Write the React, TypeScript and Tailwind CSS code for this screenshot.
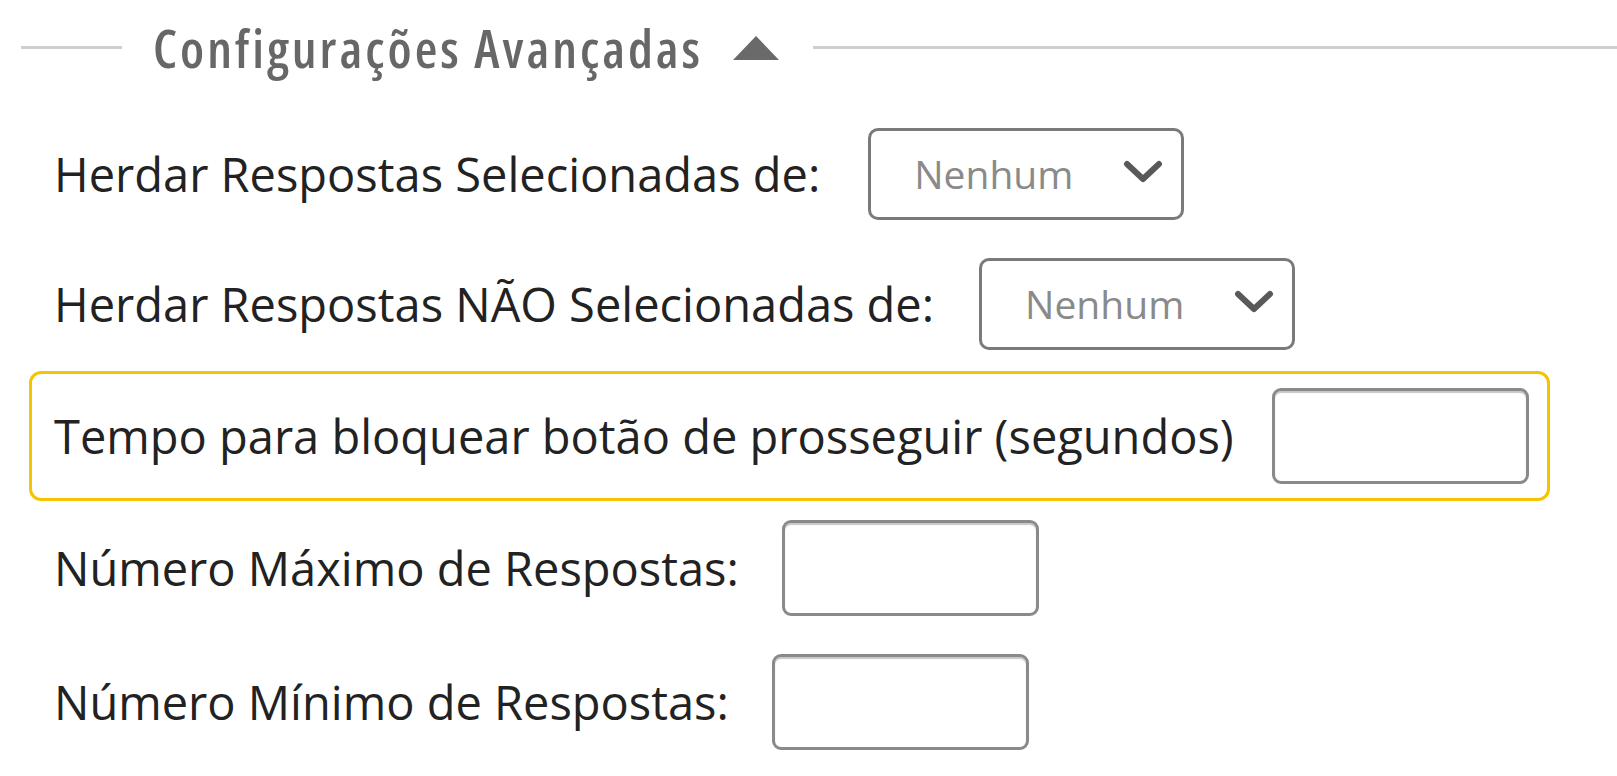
const labelFont = "font-['Open_Sans','Noto_Sans',sans-serif]";

function Select() {
  return (
    <div className="flex h-[92px] w-[316px] shrink-0 items-center justify-between rounded-[10px] border-[3px] border-[#7a7a7a] bg-white pl-[43px] pr-[18px]">
      <span className={`${labelFont} text-[39px] text-[#8a8a8a]`}>Nenhum</span>
      <svg width="40" height="24" viewBox="0 0 40 24" className="mb-[4px]">
        <polyline points="4,4 20,19 36,4" fill="none" stroke="#595959" strokeWidth="6" strokeLinecap="round" strokeLinejoin="round" />
      </svg>
    </div>
  );
}

function NumberInput() {
  return (
    <input
      type="text"
      className="h-[96px] w-[257px] shrink-0 rounded-[9px] border-[3px] border-[#8a8a8a] bg-white shadow-[inset_0_2px_1px_rgba(0,0,0,0.22)] outline-none"
    />
  );
}

export default function App() {
  return (
    <div className="h-[776px] w-full overflow-hidden bg-white">
      {/* Section header */}
      <div className="flex h-[95px] items-center pl-[21px]">
        <div className="h-[3px] w-[101px] bg-[#cfcfcf]" />
        <span className="ml-[31px] font-['Open_Sans','Noto_Sans',sans-serif] text-[52px] font-semibold font-stretch-condensed tracking-[3px] leading-none text-[#676767]">
          Configurações Avançadas
        </span>
        <svg className="ml-[30px]" width="46" height="24" viewBox="0 0 46 24">
          <polygon points="23,0 46,24 0,24" fill="#6a6a6a" />
        </svg>
        <div className="ml-[34px] h-[3px] flex-1 bg-[#cfcfcf]" />
      </div>

      <div className={`${labelFont} text-[47px] text-[#222]`}>
        <div className="mt-[33px] flex items-center gap-[48px] pl-[54px]">
          <span>Herdar Respostas Selecionadas de:</span>
          <Select />
        </div>

        <div className="mt-[38px] flex items-center gap-[45px] pl-[54px]">
          <span>Herdar Respostas NÃO Selecionadas de:</span>
          <Select />
        </div>

        <div className="ml-[29px] mt-[21px] flex h-[130px] w-[1521px] items-center justify-between rounded-[12px] border-[3px] border-[#f5c400] pl-[22px] pr-[18px]">
          <span>Tempo para bloquear botão de prosseguir (segundos)</span>
          <NumberInput />
        </div>

        <div className="mt-[19px] flex items-center gap-[43px] pl-[54px]">
          <span>Número Máximo de Respostas:</span>
          <NumberInput />
        </div>

        <div className="mt-[38px] flex items-center gap-[43px] pl-[54px]">
          <span>Número Mínimo de Respostas:</span>
          <NumberInput />
        </div>
      </div>
    </div>
  );
}
